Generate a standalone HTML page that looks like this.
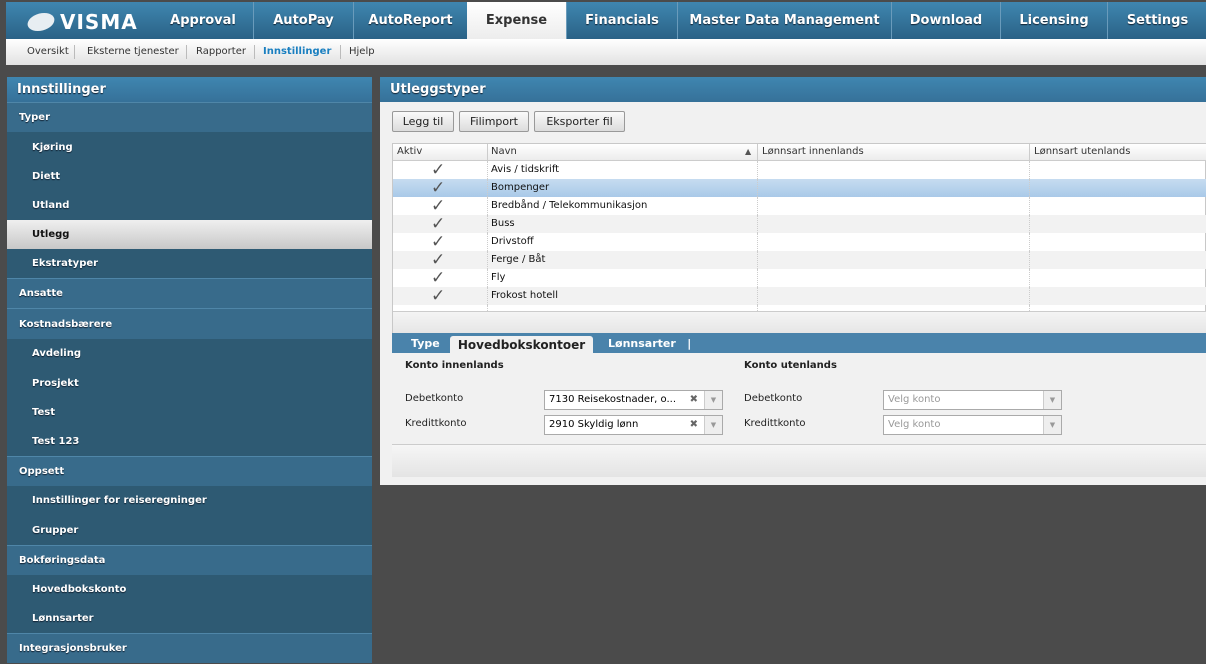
<!DOCTYPE html><html><head><meta charset="utf-8"><style>
*{margin:0;padding:0;box-sizing:border-box}
body{width:1206px;height:652px;overflow:hidden;background:#4b4b4b;font-family:Verdana,"DejaVu Sans",sans-serif;position:relative}
.abs{position:absolute}
#nav{left:6px;top:2px;width:1200px;height:37px;background:linear-gradient(#3f86b0,#2a6286);}
.tab{position:absolute;top:0;height:37px;color:#fff;font:bold 13px "DejaVu Sans",sans-serif;text-align:center;line-height:37px;border-left:1px solid #6a9bbb;text-shadow:0 1px 1px #123}
#sub{left:6px;top:39px;width:1200px;height:26px;background:linear-gradient(#fff,#e2e2e2);font-size:10px;color:#333}
#sub span{position:absolute;top:7px;white-space:nowrap}
.sep{position:absolute;top:6px;width:1px;height:14px;background:#bbb}
#left{left:7px;top:77px;width:365px;height:575px;background:#2e5a73}
.ph{height:25px;background:linear-gradient(#3f86b0,#367199);color:#fff;font:bold 13px "DejaVu Sans",sans-serif;padding:5px 10px;text-shadow:0 1px 1px #123}
.it{position:absolute;left:0;width:365px;color:#fff;font:bold 10px "DejaVu Sans",sans-serif;text-shadow:0 1px 1px #123}
.top{background:#386b8b;border-top:1px solid #4f86a8;padding-left:12px}
.s{background:#2e5a73;padding-left:25px}
#right{left:380px;top:77px;width:826px;height:408px;background:#f1f1f1}
.btn{position:absolute;top:34px;height:21px;border:1px solid #999;border-radius:2px;background:linear-gradient(#fafafa,#dcdcdc);font-size:11px;color:#222;text-align:center;line-height:19px}
.grid{position:absolute;left:12px;top:66px;width:814px;height:190px;background:#fff;border:1px solid #c8c8c8;font-size:10px;color:#111}
.row{position:absolute;left:0;width:814px;height:18px;line-height:18px}
.c{position:absolute;top:0;height:100%;border-left:1px dotted #ccc}
.chk{position:absolute;left:38px;top:0;color:#555;font-size:17px;line-height:18px}
.lbl{position:absolute;font-size:10px;color:#222}
.sel{position:absolute;height:20px;background:#fff;border:1px solid #aaa;font-size:10px;line-height:18px;padding-left:4px;width:179px}
</style></head><body>
<div id="nav" class="abs">
<div style="position:absolute;left:22px;top:8px;color:#fff;font:bold 20px 'DejaVu Sans',sans-serif;letter-spacing:1px"><span style="display:inline-block;width:26px;height:18px;border-radius:50%;background:#e8eef2;vertical-align:-2px;margin-right:6px;transform:skewX(-20deg)"></span>VISMA</div>
<div class="tab" style="left:147px;width:100px;border:none">Approval</div>
<div class="tab" style="left:247px;width:100px">AutoPay</div>
<div class="tab" style="left:347px;width:114px">AutoReport</div>
<div class="tab" style="left:461px;width:99px;background:linear-gradient(#fff,#ececec);color:#333;text-shadow:none;border:none;height:38px">Expense</div>
<div class="tab" style="left:560px;width:111px">Financials</div>
<div class="tab" style="left:671px;width:214px">Master Data Management</div>
<div class="tab" style="left:885px;width:109px">Download</div>
<div class="tab" style="left:994px;width:107px">Licensing</div>
<div class="tab" style="left:1101px;width:100px">Settings</div>
</div>
<div id="sub" class="abs">
<span style="left:21px">Oversikt</span><div class="sep" style="left:68px"></div>
<span style="left:81px">Eksterne tjenester</span><div class="sep" style="left:180px"></div>
<span style="left:190px">Rapporter</span><div class="sep" style="left:248px"></div>
<span style="left:257px;color:#1a7fc0;font-weight:bold">Innstillinger</span><div class="sep" style="left:334px"></div>
<span style="left:343px">Hjelp</span>
</div>
<div id="left" class="abs">
<div class="ph">Innstillinger</div>
<div class="it top" style="top:25px;height:30px;line-height:30px">Typer</div>
<div class="it s" style="top:56px;height:29px;line-height:29px">Kjøring</div>
<div class="it s" style="top:85px;height:29px;line-height:29px">Diett</div>
<div class="it s" style="top:114px;height:29px;line-height:29px">Utland</div>
<div class="it s" style="top:143px;height:29px;line-height:29px;background:linear-gradient(#efefef,#c8c8c8);color:#111;text-shadow:none">Utlegg</div>
<div class="it s" style="top:172px;height:29px;line-height:29px">Ekstratyper</div>
<div class="it top" style="top:201px;height:30px;line-height:30px">Ansatte</div>
<div class="it top" style="top:231px;height:31px;line-height:31px">Kostnadsbærere</div>
<div class="it s" style="top:262px;height:30px;line-height:30px">Avdeling</div>
<div class="it s" style="top:292px;height:29px;line-height:29px">Prosjekt</div>
<div class="it s" style="top:321px;height:29px;line-height:29px">Test</div>
<div class="it s" style="top:350px;height:29px;line-height:29px">Test 123</div>
<div class="it top" style="top:379px;height:30px;line-height:30px">Oppsett</div>
<div class="it s" style="top:409px;height:30px;line-height:30px">Innstillinger for reiseregninger</div>
<div class="it s" style="top:439px;height:29px;line-height:29px">Grupper</div>
<div class="it top" style="top:468px;height:30px;line-height:30px">Bokføringsdata</div>
<div class="it s" style="top:498px;height:29px;line-height:29px">Hovedbokskonto</div>
<div class="it s" style="top:527px;height:29px;line-height:29px">Lønnsarter</div>
<div class="it top" style="top:556px;height:30px;line-height:30px">Integrasjonsbruker</div>
</div>
<div id="right" class="abs">
<div class="ph">Utleggstyper</div>
<div class="btn" style="left:12px;width:62px">Legg til</div>
<div class="btn" style="left:79px;width:70px">Filimport</div>
<div class="btn" style="left:154px;width:91px">Eksporter fil</div>
<div class="grid">
<div class="row" style="top:0;height:17px;line-height:16px;background:linear-gradient(#fff,#ececec);border-bottom:1px solid #ccc;color:#333">
<span style="position:absolute;left:4px">Aktiv</span><div class="c" style="left:94px;border-left:1px solid #ccc"></div><span style="position:absolute;left:98px">Navn</span><span style="position:absolute;left:352px;font-size:8px;color:#555">▲</span><div class="c" style="left:364px;border-left:1px solid #ccc"></div><span style="position:absolute;left:369px">Lønnsart innenlands</span><div class="c" style="left:636px;border-left:1px solid #ccc"></div><span style="position:absolute;left:641px">Lønnsart utenlands</span></div>
<div class="row" style="top:17px"><span class="chk">✓</span><div class="c" style="left:94px"></div><span style="position:absolute;left:98px">Avis / tidskrift</span><div class="c" style="left:364px"></div><div class="c" style="left:636px"></div></div>
<div class="row" style="top:35px;background:linear-gradient(#c6dcf0,#a9c9e8)"><span class="chk">✓</span><div class="c" style="left:94px"></div><span style="position:absolute;left:98px">Bompenger</span><div class="c" style="left:364px"></div><div class="c" style="left:636px"></div></div>
<div class="row" style="top:53px"><span class="chk">✓</span><div class="c" style="left:94px"></div><span style="position:absolute;left:98px">Bredbånd / Telekommunikasjon</span><div class="c" style="left:364px"></div><div class="c" style="left:636px"></div></div>
<div class="row" style="top:71px;background:#f2f2f2"><span class="chk">✓</span><div class="c" style="left:94px"></div><span style="position:absolute;left:98px">Buss</span><div class="c" style="left:364px"></div><div class="c" style="left:636px"></div></div>
<div class="row" style="top:89px"><span class="chk">✓</span><div class="c" style="left:94px"></div><span style="position:absolute;left:98px">Drivstoff</span><div class="c" style="left:364px"></div><div class="c" style="left:636px"></div></div>
<div class="row" style="top:107px;background:#f2f2f2"><span class="chk">✓</span><div class="c" style="left:94px"></div><span style="position:absolute;left:98px">Ferge / Båt</span><div class="c" style="left:364px"></div><div class="c" style="left:636px"></div></div>
<div class="row" style="top:125px"><span class="chk">✓</span><div class="c" style="left:94px"></div><span style="position:absolute;left:98px">Fly</span><div class="c" style="left:364px"></div><div class="c" style="left:636px"></div></div>
<div class="row" style="top:143px;background:#f2f2f2"><span class="chk">✓</span><div class="c" style="left:94px"></div><span style="position:absolute;left:98px">Frokost hotell</span><div class="c" style="left:364px"></div><div class="c" style="left:636px"></div></div>
<div class="row" style="top:161px;height:6px;overflow:hidden"><div class="c" style="left:94px"></div><div class="c" style="left:364px"></div><div class="c" style="left:636px"></div></div>
<div class="row" style="top:167px;height:22px;background:linear-gradient(#f4f4f4,#e6e6e6);border-top:1px solid #ccc"></div>
</div>
<div class="abs" style="left:12px;top:256px;width:814px;height:20px;background:#4a83ab;font:bold 11px 'DejaVu Sans',sans-serif;color:#fff">
<span style="position:absolute;left:19px;top:4px">Type</span>
<div style="position:absolute;left:58px;top:3px;width:143px;height:17px;background:#f1f1f1;border-radius:3px 3px 0 0;color:#222;font-size:12px;text-align:center;line-height:18px">Hovedbokskontoer</div>
<span style="position:absolute;left:216px;top:4px">Lønnsarter &nbsp; |</span></div>
<div class="lbl" style="left:25px;top:283px;font-weight:bold">Konto innenlands</div>
<div class="lbl" style="left:364px;top:283px;font-weight:bold">Konto utenlands</div>
<div class="lbl" style="left:25px;top:316px">Debetkonto</div>
<div class="lbl" style="left:25px;top:341px">Kredittkonto</div>
<div class="lbl" style="left:364px;top:316px">Debetkonto</div>
<div class="lbl" style="left:364px;top:341px">Kredittkonto</div>
<div class="sel" style="left:164px;top:313px">7130 Reisekostnader, o...<span style="position:absolute;right:24px;color:#666">✖</span><span style="position:absolute;right:0;width:18px;height:18px;border-left:1px solid #ccc;background:#eee;color:#999;font-size:7px;text-align:center">▼</span></div>
<div class="sel" style="left:164px;top:338px">2910 Skyldig lønn<span style="position:absolute;right:24px;color:#666">✖</span><span style="position:absolute;right:0;width:18px;height:18px;border-left:1px solid #ccc;background:#eee;color:#999;font-size:7px;text-align:center">▼</span></div>
<div class="sel" style="left:503px;top:313px;color:#999">Velg konto<span style="position:absolute;right:0;width:18px;height:18px;border-left:1px solid #ccc;background:#eee;color:#999;font-size:7px;text-align:center">▼</span></div>
<div class="sel" style="left:503px;top:338px;color:#999">Velg konto<span style="position:absolute;right:0;width:18px;height:18px;border-left:1px solid #ccc;background:#eee;color:#999;font-size:7px;text-align:center">▼</span></div>
<div class="abs" style="left:12px;top:367px;width:814px;height:33px;border-top:1px solid #ccc;background:linear-gradient(#f6f6f6,#e4e4e4)"></div>
</div>
</body></html>
